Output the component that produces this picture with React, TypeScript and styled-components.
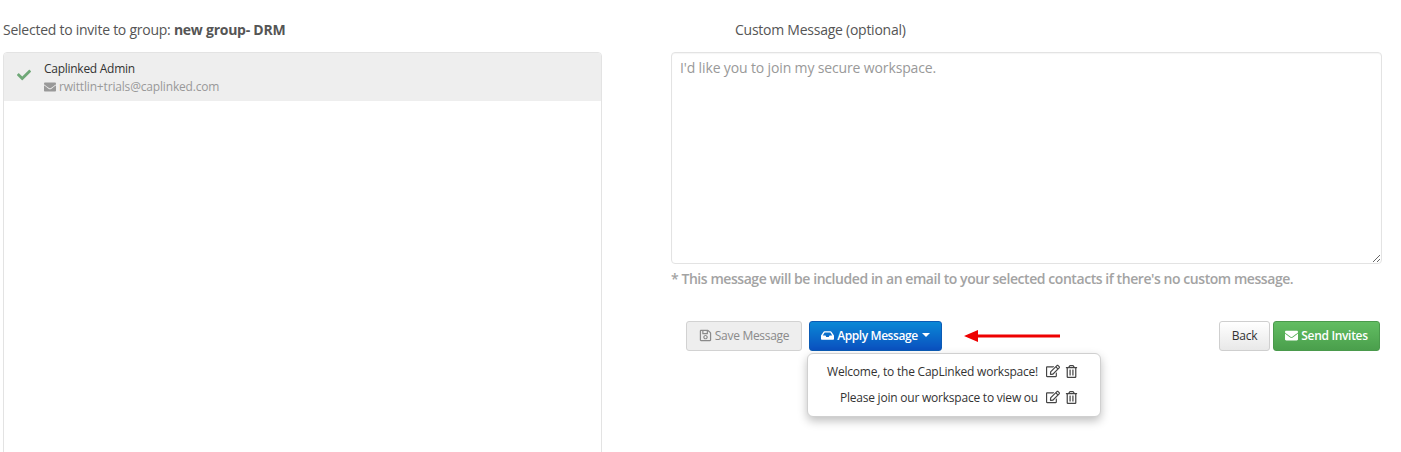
import React from "react";
import styled, { createGlobalStyle } from "styled-components";
import { FaCheck, FaEnvelope, FaRegSave, FaInbox, FaRegEdit, FaRegTrashAlt } from "react-icons/fa";

const Global = createGlobalStyle`
  html, body { margin: 0; padding: 0; background: #fff; height: 452px; overflow: hidden; }
  body { font-family: "Open Sans", "Liberation Sans", sans-serif; font-size: 12px; color: #333; }
`;

const Page = styled.div`
  display: grid;
  grid-template-columns: 599px 711px;
  column-gap: 69px;
  padding: 21px 0 0 3px;
  height: 431px;
  overflow: hidden;
`;
const Column = styled.section`
  display: flex;
  flex-direction: column;
  min-width: 0;
`;
const Heading = styled.div<{ $indent?: number }>`
  font-size: 14px;
  letter-spacing: -0.25px;
  line-height: 18px;
  height: 18px;
  margin-bottom: 13px;
  color: #555;
  padding-left: ${(p) => p.$indent ?? 0}px;
  b { font-weight: 700; }
`;
const ListPanel = styled.div`
  height: 420px;
  border: 1px solid #e3e3e3;
  border-radius: 4px;
  box-sizing: border-box;
`;
const ContactRow = styled.div`
  height: 48px;
  background: #eeeeee;
  display: flex;
  align-items: flex-start;
  padding: 7px 0 0 13px;
  box-sizing: border-box;
  border-radius: 3px 3px 0 0;
`;
const CheckMark = styled(FaCheck)`
  color: #6fa877;
  width: 14px;
  height: 14px;
  margin: 8px 13px 0 0;
  flex: none;
`;
const ContactText = styled.div`
  display: flex;
  flex-direction: column;
`;
const ContactName = styled.div`
  font-size: 12px;
  letter-spacing: -0.27px;
  line-height: 18px;
  color: #333;
`;
const ContactMail = styled.div`
  font-size: 12px;
  letter-spacing: -0.17px;
  line-height: 18px;
  color: #999;
  display: flex;
  align-items: center;
  gap: 3px;
  svg { width: 12px; height: 12px; color: #999; }
`;
const MessageBox = styled.textarea`
  display: block;
  width: 711px;
  height: 212px;
  box-sizing: border-box;
  margin: 0;
  padding: 5px 8px;
  border: 1px solid #e3e3e3;
  border-radius: 4px;
  font-family: inherit;
  font-size: 14px;
  letter-spacing: -0.14px;
  line-height: 20px;
  color: #555;
  outline: none;
  box-shadow: inset 0 1px 1px rgba(0, 0, 0, 0.04);
  &::placeholder { color: #999; opacity: 1; }
`;
const Note = styled.div`
  margin-top: 5px;
  font-size: 14px;
  letter-spacing: -0.44px;
  line-height: 20px;
  font-weight: 600;
  color: #a3a3a3;
  white-space: nowrap;
`;
const Actions = styled.div`
  margin-top: 32px;
  padding: 0 2px 0 15px;
  display: flex;
  align-items: flex-start;
  position: relative;
`;
const Button = styled.button<{ $tone: "muted" | "blue" | "plain" | "green" }>`
  height: 30px;
  box-sizing: border-box;
  border-radius: 3px;
  font-family: inherit;
  font-size: 12px;
  padding: 0 0 2px;
  display: inline-flex;
  align-items: center;
  justify-content: center;
  gap: 3px;
  white-space: nowrap;
  ${(p) =>
    p.$tone === "muted"
      ? `width:116px;background:#eeeeee;border:1px solid #d2d2d2;color:#8a8a8a;letter-spacing:-0.3px;`
      : p.$tone === "blue"
      ? `width:133px;margin-left:7px;background:linear-gradient(#0a88d6,#0a50bf);border:1px solid #0b5bb5;color:#fff;font-weight:600;letter-spacing:-0.42px;`
      : p.$tone === "plain"
      ? `width:51px;margin-left:auto;background:linear-gradient(#ffffff,#e8e8e8);border:1px solid #cfcfcf;color:#333;letter-spacing:-0.2px;`
      : `width:107px;margin-left:3px;background:linear-gradient(#62bd62,#4a9f4c);border:1px solid #4a9a4c;color:#fff;font-weight:600;letter-spacing:-0.33px;`}
  svg { width: 13px; height: 13px; flex: none; }
`;
const Caret = styled.span`
  width: 0;
  height: 0;
  margin-left: 1px;
  border-left: 4px solid transparent;
  border-right: 4px solid transparent;
  border-top: 4px solid #fff;
`;
const ArrowMark = styled.svg`
  position: absolute;
  left: 293px;
  top: 6px;
`;
const Menu = styled.div`
  position: absolute;
  left: 136px;
  top: 32px;
  width: 294px;
  height: 64px;
  box-sizing: border-box;
  background: #fff;
  border: 1px solid #d0d0d0;
  border-radius: 6px;
  box-shadow: 0 4px 10px rgba(0, 0, 0, 0.25);
  padding: 4px 0;
  display: flex;
  flex-direction: column;
`;
const MenuItem = styled.div`
  height: 26px;
  display: flex;
  align-items: center;
  justify-content: flex-end;
  padding-right: 22px;
  font-size: 12px;
  letter-spacing: -0.22px;
  color: #333;
  white-space: nowrap;
`;
const ItemIcons = styled.span`
  display: inline-flex;
  align-items: center;
  margin-left: 8px;
  gap: 5px;
  color: #444;
  svg { width: 14px; height: 14px; }
  svg + svg { width: 13px; height: 13px; }
`;

export default function App() {
  return (
    <>
      <Global />
      <Page>
        <Column>
          <Heading>
            Selected to invite to group: <b>new group- DRM</b>
          </Heading>
          <ListPanel>
            <ContactRow>
              <CheckMark />
              <ContactText>
                <ContactName>Caplinked Admin</ContactName>
                <ContactMail>
                  <FaEnvelope />
                  rwittlin+trials@caplinked.com
                </ContactMail>
              </ContactText>
            </ContactRow>
          </ListPanel>
        </Column>
        <Column>
          <Heading $indent={64}>Custom Message (optional)</Heading>
          <MessageBox placeholder="I'd like you to join my secure workspace." />
          <Note>* This message will be included in an email to your selected contacts if there's no custom message.</Note>
          <Actions>
            <Button $tone="muted">
              <FaRegSave />
              Save Message
            </Button>
            <Button $tone="blue">
              <FaInbox />
              Apply Message
              <Caret />
            </Button>
            <Button $tone="plain">Back</Button>
            <Button $tone="green">
              <FaEnvelope />
              Send Invites
            </Button>
            <ArrowMark width="98" height="18" viewBox="0 0 98 18">
              <path d="M0 9 L14 3 V7.5 H96 V10.5 H14 V15 Z" fill="#ee0000" />
            </ArrowMark>
            <Menu>
              <MenuItem>
                Welcome, to the CapLinked workspace!
                <ItemIcons>
                  <FaRegEdit />
                  <FaRegTrashAlt />
                </ItemIcons>
              </MenuItem>
              <MenuItem>
                Please join our workspace to view ou
                <ItemIcons>
                  <FaRegEdit />
                  <FaRegTrashAlt />
                </ItemIcons>
              </MenuItem>
            </Menu>
          </Actions>
        </Column>
      </Page>
    </>
  );
}
